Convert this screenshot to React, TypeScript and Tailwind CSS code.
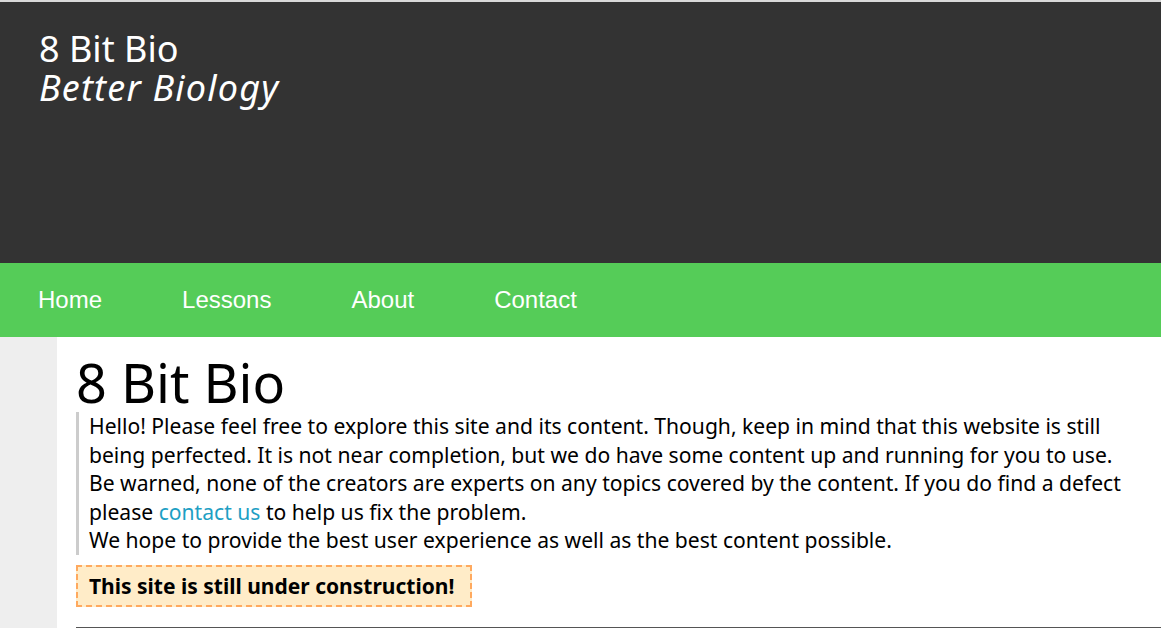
const navLinks = ["Home", "Lessons", "About", "Contact"];

export default function App() {
  return (
    <div className="min-h-screen bg-white border-t-2 border-[#d9d9d9]">
      <header className="h-[261px] bg-[#333333] pl-[39px] pt-[27px] font-['Noto_Sans',sans-serif] text-[36px] leading-[39px] text-white">
        <div>8 Bit Bio</div>
        <div className="italic tracking-[1.2px]">Better Biology</div>
      </header>

      <nav className="flex h-[74px] items-center gap-20 bg-[#55cc58] pl-[38px] font-['Liberation_Sans',Arial,sans-serif] text-[24px] text-white">
        {navLinks.map((label) => (
          <a key={label} href="#">
            {label}
          </a>
        ))}
      </nav>

      <div className="flex">
        <aside className="w-[57px] shrink-0 bg-[#eeeeee]" />
        <main className="flex-1 pl-[19px] pb-6 font-['Noto_Sans',sans-serif] text-black">
          <h1 className="mt-[18px] text-[54px] leading-none">8 Bit Bio</h1>

          <blockquote className="mr-6 mt-[3px] border-l-[3px] border-[#cccccc] pl-[10px] text-[21.1px] leading-[28.6px]">
            <p>
              Hello! Please feel free to explore this site and its content. Though, keep in mind
              that this website is still being perfected. It is not near completion, but we do
              have some content up and running for you to use. Be warned, none of the creators
              are experts on any topics covered by the content. If you do find a defect please{" "}
              <a href="#" className="text-[#1e9fc4]">
                contact us
              </a>{" "}
              to help us fix the problem.
            </p>
            <p>We hope to provide the best user experience as well as the best content possible.</p>
          </blockquote>

          <div className="mt-[10px] w-fit border-2 border-dashed border-[#ffa95e] bg-[#ffecc8] py-[5px] pl-[11px] pr-[16px] text-[21px] font-bold leading-[28px]">
            This site is still under construction!
          </div>

          <hr className="mt-[20px] border-t border-[#555555]" />
        </main>
      </div>
    </div>
  );
}
